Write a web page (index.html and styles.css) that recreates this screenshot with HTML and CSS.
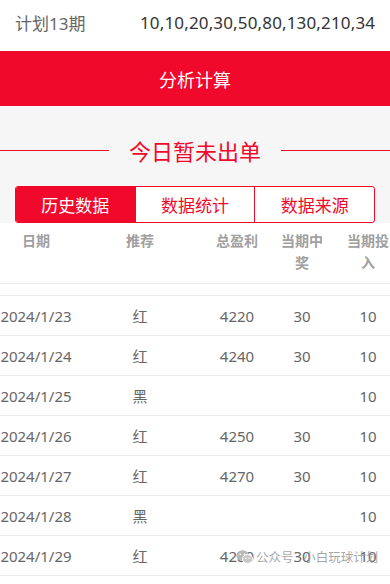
FILE: index.html
```html
<!DOCTYPE html>
<html lang="zh">
<head>
<meta charset="utf-8">
<title>计划</title>
<link rel="stylesheet" href="styles.css">
</head>
<body>
<div class="page">
  <div class="plan">
    <span class="plan-label">计划13期</span>
    <span class="plan-value">10,10,20,30,50,80,130,210,34</span>
  </div>
  <div class="calc-btn">分析计算</div>
  <div class="section">
    <div class="title"><span class="line"></span><span class="title-text">今日暂未出单</span><span class="line"></span></div>
    <div class="tabs">
      <div class="tab active">历史数据</div>
      <div class="tab">数据统计</div>
      <div class="tab">数据来源</div>
    </div>
  </div>
  <div class="table">
    <div class="row head">
      <div class="cell">日期</div>
      <div class="cell">推荐</div>
      <div class="cell wide">总盈利</div>
      <div class="cell narrow4">当期中奖</div>
      <div class="cell narrow5">当期投入</div>
    </div>
    <div class="row spacer"></div>
    <div class="row"><div class="cell">2024/1/23</div><div class="cell">红</div><div class="cell">4220</div><div class="cell">30</div><div class="cell">10</div></div>
    <div class="row"><div class="cell">2024/1/24</div><div class="cell">红</div><div class="cell">4240</div><div class="cell">30</div><div class="cell">10</div></div>
    <div class="row"><div class="cell">2024/1/25</div><div class="cell">黑</div><div class="cell"></div><div class="cell"></div><div class="cell">10</div></div>
    <div class="row"><div class="cell">2024/1/26</div><div class="cell">红</div><div class="cell">4250</div><div class="cell">30</div><div class="cell">10</div></div>
    <div class="row"><div class="cell">2024/1/27</div><div class="cell">红</div><div class="cell">4270</div><div class="cell">30</div><div class="cell">10</div></div>
    <div class="row"><div class="cell">2024/1/28</div><div class="cell">黑</div><div class="cell"></div><div class="cell"></div><div class="cell">10</div></div>
    <div class="row"><div class="cell">2024/1/29</div><div class="cell">红</div><div class="cell">4280</div><div class="cell">30</div><div class="cell">10</div></div>
  </div>
  <div class="watermark">
    <svg class="wx" width="17" height="14" viewBox="0 0 17 14">
      <ellipse cx="6.5" cy="5.5" rx="6.2" ry="5.2" fill="#b8b8b8"/>
      <ellipse cx="11.5" cy="9" rx="5.2" ry="4.4" fill="#c8c8c8" stroke="#fff" stroke-width="1"/>
      <circle cx="4.3" cy="4.3" r="0.9" fill="#fff"/>
      <circle cx="8.5" cy="4.3" r="0.9" fill="#fff"/>
      <circle cx="9.8" cy="8.3" r="0.7" fill="#fff"/>
      <circle cx="13.2" cy="8.3" r="0.7" fill="#fff"/>
    </svg>
    <span>公众号 · 小白玩球计划</span>
  </div>
</div>
</body>
</html>
```

FILE: styles.css
```css
* { box-sizing: border-box; }
html, body { margin: 0; padding: 0; background: #fff; }
body {
  font-family: "Noto Sans", "Noto Sans CJK SC", sans-serif;
  width: 390px;
  height: 584px;
  overflow: hidden;
}
.page { position: relative; height: 584px; overflow: hidden; }
.plan {
  height: 51px;
  display: flex;
  align-items: center;
  padding: 0 15px 6px 15px;
  font-size: 17px;
  white-space: nowrap;
  overflow: hidden;
}
.plan-label { width: 125px; flex: none; color: #666; }
.plan-value { color: #333; letter-spacing: 0.15px; overflow: hidden; }
.calc-btn {
  height: 55px;
  background: #f0092a;
  color: #fff;
  font-size: 18px;
  display: flex;
  align-items: center;
  justify-content: center;
}
.section {
  background: #f6f6f6;
  padding: 29px 15px 0;
  height: 117px;
}
.title {
  display: flex;
  align-items: center;
  margin: 0 -15px;
  height: 31px;
}
.line { flex: 1; height: 1px; background: #f0092a; }
.title-text {
  color: #f0092a;
  font-size: 22px;
  padding: 0 20px;
  line-height: 30px;
}
.tabs {
  margin-top: 20px;
  height: 37px;
  display: flex;
  border: 1px solid #f0092a;
  border-radius: 3px;
  overflow: hidden;
  background: #fff;
}
.tab {
  flex: 1;
  display: flex;
  align-items: center;
  justify-content: center;
  color: #f0092a;
  font-size: 17px;
  border-left: 1px solid #f0092a;
}
.tab:first-child { border-left: none; }
.tab.active { background: #f0092a; color: #fff; }
.table { width: 398px; }
.row {
  display: grid;
  grid-template-columns: 72px 136px 58px 72px 60px;
  height: 40px;
  align-items: center;
  border-bottom: 1px solid #ebedf0;
  font-size: 15px;
  color: #666;
}
.cell { text-align: center; white-space: nowrap; }
.row.head {
  height: 61px;
  align-items: start;
  padding-top: 7px;
  font-size: 14px;
  font-weight: 700;
  color: #a0a0a0;
  line-height: 22px;
}
.row.head .cell { white-space: normal; padding: 0; }
.row.head .cell.narrow4 { padding: 0 10px; }
.row.head .cell.narrow5 { padding: 0 6px; }
.row.spacer { height: 12px; }
.watermark {
  position: absolute;
  left: 236px;
  top: 547px;
  display: flex;
  align-items: center;
  gap: 3px;
  font-size: 12.5px;
  color: rgba(150, 150, 150, 0.85);
  white-space: nowrap;
}
.wx { flex: none; }
```
